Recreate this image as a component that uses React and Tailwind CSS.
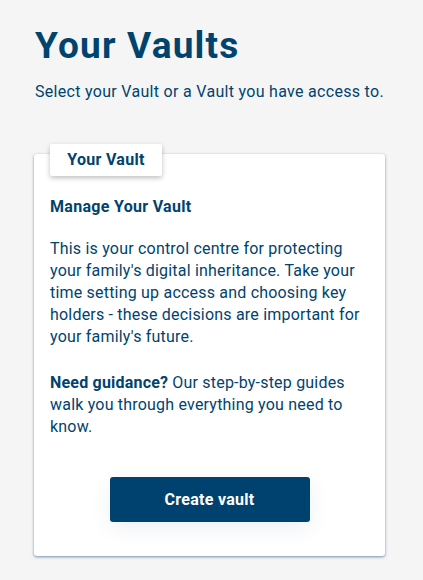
import React from "react";

const App = () => {
  return (
    <div
      className="min-h-[580px] bg-[#f5f5f5] px-[35px] pt-[20px] text-[#00436f]"
      style={{ fontFamily: "Roboto, 'Noto Sans', sans-serif" }}
    >
      <h1 className="text-[37px] font-bold leading-[52px] tracking-[1.2px]">
        Your Vaults
      </h1>
      <p className="mt-[8px] text-[16px] leading-[24px] tracking-[0.3px]">
        Select your Vault or a Vault you have access to.
      </p>

      <div className="relative mt-[50px] ml-[-1px] w-[351px] rounded-[3px] bg-white px-[16px] pb-[34px] pt-[41px] shadow-[0_1px_3px_rgba(0,60,110,0.55)]">
        <div className="absolute left-[16px] top-[-10px] flex h-[32px] w-[112px] items-center justify-center rounded-[2px] bg-white shadow-[0_2px_5px_rgba(0,0,0,0.25)]">
          <span className="text-[16px] font-bold tracking-[0.3px]">
            Your Vault
          </span>
        </div>

        <h2 className="text-[16px] font-bold leading-[24px] tracking-[0.3px]">
          Manage Your Vault
        </h2>

        <p className="mt-[19px] text-[16px] leading-[22px] tracking-[0.2px]">
          This is your control centre for protecting your family's digital
          inheritance. Take your time setting up access and choosing key
          holders - these decisions are important for your family's future.
        </p>

        <p className="mt-[24px] text-[16px] leading-[22px] tracking-[0.2px]">
          <strong className="font-bold">Need guidance?</strong> Our
          step-by-step guides walk you through everything you need to know.
        </p>

        <div className="mt-[39px] flex justify-center">
          <button className="h-[45px] w-[200px] rounded-[3px] bg-[#00426f] text-[16px] font-bold tracking-[0.3px] text-white shadow-[0_6px_20px_rgba(0,66,111,0.08)]">
            Create vault
          </button>
        </div>
      </div>
    </div>
  );
};

export default App;
